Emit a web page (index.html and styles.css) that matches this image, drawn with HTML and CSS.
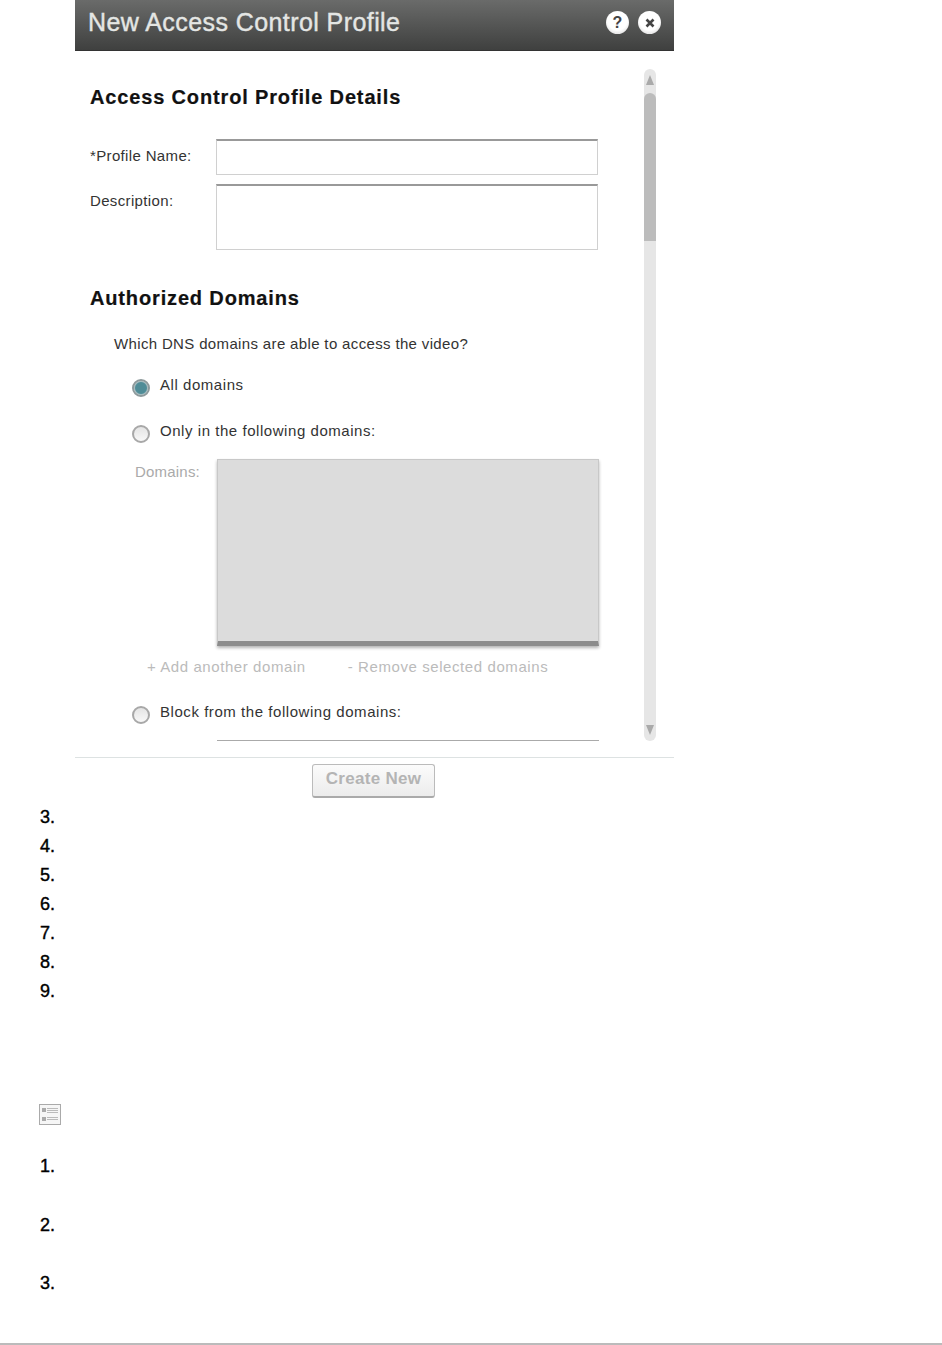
FILE: index.html
```html
<!DOCTYPE HTML>
<html lang="en">
  <head>
    <title>New Access Control Profile</title>
    <meta charset="utf-8">
    <link rel="stylesheet" href="styles.css">
  </head>
  <body>

  <div class="dialog">
    <div class="titlebar">
      <span class="title">New Access Control Profile</span>
      <div class="title-icons">
        <span class="round-btn">?</span>
        <span class="round-btn">
          <svg width="12" height="12" viewBox="0 0 12 12"><path d="M2.5 2.5L9.5 9.5M9.5 2.5L2.5 9.5" stroke="#444" stroke-width="2.6" fill="none"/></svg>
        </span>
      </div>
    </div>

    <div class="dialog-body">
      <div class="form">
        <h2 class="first">Access Control Profile Details</h2>
        <div class="field name-field">
          <label>*Profile Name:</label>
          <input class="text-input" type="text">
        </div>
        <div class="field">
          <label>Description:</label>
          <textarea class="text-area"></textarea>
        </div>

        <h2 class="second">Authorized Domains</h2>
        <p class="question">Which DNS domains are able to access the video?</p>

        <div class="radio-row all-row"><span class="radio checked"></span><span>All domains</span></div>
        <div class="radio-row only-row"><span class="radio"></span><span>Only in the following domains:</span></div>

        <div class="domains">
          <label>Domains:</label>
          <div class="domain-box"></div>
        </div>
        <div class="domain-links">
          <span>+ Add another domain</span>
          <span>- Remove selected domains</span>
        </div>

        <div class="radio-row block-row"><span class="radio"></span><span>Block from the following domains:</span></div>
        <div class="cut-box"></div>
      </div>

      <div class="scrollbar">
        <svg class="arrow" width="10" height="12" viewBox="0 0 10 12"><path d="M5 1L9 11H1z" fill="#aaa"/></svg>
        <div class="thumb"></div>
        <svg class="arrow arrow-down" width="10" height="12" viewBox="0 0 10 12"><path d="M1 1H9L5 11z" fill="#aaa"/></svg>
      </div>
    </div>

    <div class="dialog-foot">
      <button class="create-btn">Create New</button>
    </div>
  </div>

  <ol class="steps first-steps" start="3">
    <li></li><li></li><li></li><li></li><li></li><li></li><li></li>
  </ol>

  <svg class="note-icon" width="22" height="21" viewBox="0 0 22 21">
    <rect x="0.5" y="0.5" width="21" height="20" fill="#f6f6f6" stroke="#aaa"/>
    <rect x="3" y="4" width="4" height="4" fill="#aaa"/>
    <rect x="3" y="13" width="4" height="4" fill="#aaa"/>
    <path d="M8 4.5H19M8 6.5H19M8 8.5H19M8 13.5H19M8 15.5H19" stroke="#bbb"/>
  </svg>

  <ol class="steps spaced">
    <li></li><li></li><li></li>
  </ol>

  <div class="page-rule"></div>

  </body>
</html>
```

FILE: styles.css
```css
html {
  height: 100%;
}
body {
  margin: 0;
  padding: 0;
  background: #fff;
  color: #000;
  font-family: "Liberation Sans", Arial, sans-serif;
  font-size: 15px;
}

.dialog {
  width: 599px;
  margin-left: 75px;
}

.titlebar {
  height: 51px;
  box-sizing: border-box;
  padding: 0 13px 5px 13px;
  display: flex;
  align-items: center;
  justify-content: space-between;
  background: linear-gradient(#6a6b6a, #3f403f);
  border-bottom: 1px solid #333;
}
.title {
  color: #e4e6e4;
  font-size: 25px;
  letter-spacing: 0.42px;
  -webkit-text-stroke: 0.4px #e4e6e4;
}
.title-icons {
  display: flex;
  gap: 9px;
}
.round-btn {
  width: 23px;
  height: 23px;
  border-radius: 50%;
  background: radial-gradient(circle at 50% 40%, #fff 55%, #c9c9c9);
  color: #444;
  font-size: 16px;
  font-weight: bold;
  display: flex;
  align-items: center;
  justify-content: center;
}

.dialog-body {
  height: 706px;
  overflow: hidden;
  display: flex;
}
.form {
  width: 524px;
  padding-left: 15px;
  color: #333;
}

h2 {
  margin: 0;
  color: #111;
  font-size: 20px;
  line-height: 24px;
  letter-spacing: 0.85px;
  -webkit-text-stroke: 0.2px #111;
}
h2.first {
  margin-top: 34px;
}
h2.second {
  margin-top: 36px;
}

.field {
  display: flex;
  margin-top: 9px;
}
.name-field {
  margin-top: 30px;
}
.field label {
  width: 126px;
  padding-top: 9px;
  line-height: 16px;
  letter-spacing: 0.35px;
}
.text-input, .text-area {
  display: block;
  width: 382px;
  margin: 0;
  padding: 0;
  box-sizing: border-box;
  background: #fff;
  border: 1px solid #d0d0d0;
  border-top: 2px solid #999;
  resize: none;
}
.text-input {
  height: 36px;
}
.text-area {
  height: 66px;
}

.question {
  margin: 24px 0 0 24px;
  line-height: 20px;
  letter-spacing: 0.35px;
}

.radio-row {
  display: flex;
  align-items: flex-start;
  gap: 10px;
  margin-left: 42px;
  line-height: 18px;
  letter-spacing: 0.55px;
}
.all-row {
  margin-top: 22px;
}
.only-row {
  margin-top: 25px;
}
.block-row {
  margin-top: 27px;
}
.radio {
  width: 18px;
  height: 18px;
  flex: none;
  box-sizing: border-box;
  margin-top: 3px;
  border: 2px solid #a8a8a8;
  border-radius: 50%;
  background: linear-gradient(#e4e4e4, #f8f8f8);
}
.radio.checked {
  background: radial-gradient(circle, #4f8c97 55%, #c8d4d6 70%);
  border-color: #8e9a9c;
}

.domains {
  display: flex;
  margin-top: 16px;
}
.domains label {
  width: 82px;
  margin-left: 45px;
  padding-top: 4px;
  line-height: 18px;
  letter-spacing: 0.2px;
  color: #aaa;
}
.domain-box {
  width: 382px;
  height: 187px;
  box-sizing: border-box;
  background: #dcdcdc;
  border: 1px solid #c8c8c8;
  border-bottom: 5px solid #8c8c8c;
  box-shadow: 0 2px 3px rgba(0,0,0,0.3);
}

.domain-links {
  display: flex;
  gap: 42px;
  margin: 12px 0 0 57px;
  line-height: 18px;
  letter-spacing: 0.58px;
  color: #bbb;
}

.cut-box {
  width: 382px;
  height: 1px;
  margin: 16px 0 0 127px;
  background: #aaa;
}

.scrollbar {
  width: 12px;
  height: 672px;
  margin: 18px 0 0 30px;
  border-radius: 6px;
  background: #e6e6e6;
  display: flex;
  flex-direction: column;
  align-items: center;
}
.arrow {
  margin-top: 5px;
  height: 12px;
}
.thumb {
  width: 12px;
  height: 148px;
  margin-top: 7px;
  border-radius: 6px 6px 0 0;
  background: #bcbcbc;
}
.arrow-down {
  margin-top: auto;
  margin-bottom: 5px;
}

.dialog-foot {
  height: 40px;
  box-sizing: border-box;
  border-top: 1px solid #dde2e2;
  padding: 6px 2px 0 0;
  display: flex;
  justify-content: center;
}
.create-btn {
  width: 123px;
  height: 34px;
  box-sizing: border-box;
  padding: 0 0 3px;
  border: 1px solid #bbb;
  border-bottom: 2px solid #aaa;
  border-radius: 3px;
  background: linear-gradient(#fbfbfb, #ececec);
  color: #b4b4b4;
  font-family: "Liberation Sans", Arial, sans-serif;
  font-size: 17px;
  font-weight: bold;
  letter-spacing: 0.3px;
}

.steps {
  margin: 0;
  padding-left: 40px;
  list-style: none;
  font-size: 18px;
  line-height: 29px;
}
.first-steps {
  margin-top: 6px;
}
.steps li {
  height: 29px;
}
.steps li::before {
  content: counter(list-item) ".";
  -webkit-text-stroke: 0.4px #000;
}
.spaced {
  margin-top: 27px;
}
.spaced li {
  height: 58.5px;
}

.note-icon {
  display: block;
  margin: 98px 0 0 39px;
}

.page-rule {
  height: 2px;
  margin-top: 15px;
  background: #bbb;
}
```
